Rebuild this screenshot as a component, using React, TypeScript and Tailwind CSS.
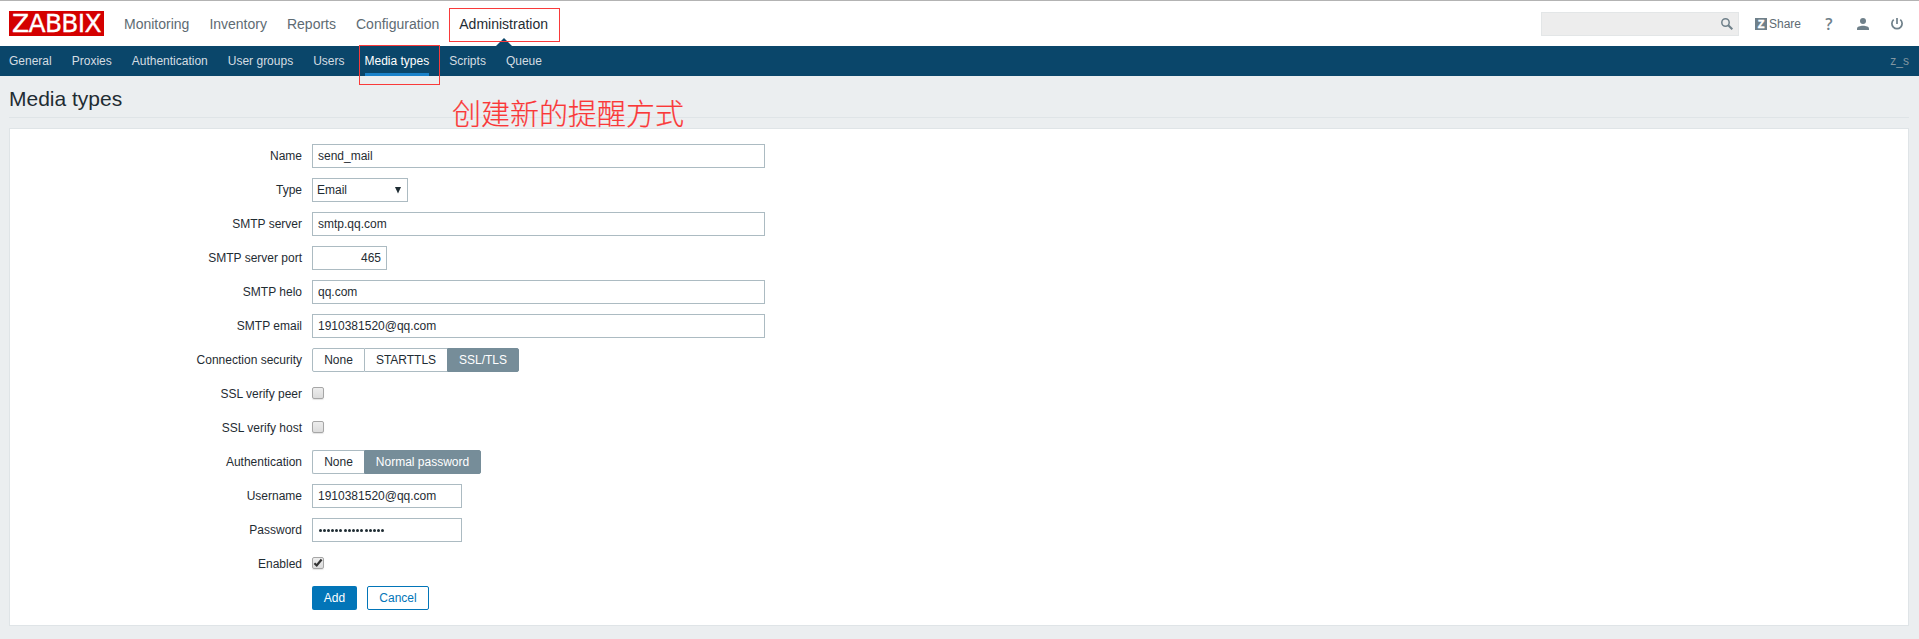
import React from "react";

const NAV = ["Monitoring", "Inventory", "Reports", "Configuration", "Administration"];
const SUB = ["General", "Proxies", "Authentication", "User groups", "Users", "Media types", "Scripts", "Queue"];

function Logo() {
  return (
    <div className="flex h-[25px] w-[95px] items-center justify-center bg-[#d40000] font-['DejaVu_Sans',sans-serif] text-[25px] leading-[29px] tracking-[-0.7px] whitespace-nowrap text-white [-webkit-text-stroke:0.3px_#fff]">
      ZABBIX
    </div>
  );
}

function Row({ label, children }: { label: string; children?: React.ReactNode }) {
  return (
    <div className="flex h-6 items-center gap-2.5">
      <div className="w-[292px] text-right">{label}</div>
      {children}
    </div>
  );
}

function Field({ value, size, className = "" }: { value: string; size: string; className?: string }) {
  return (
    <input
      readOnly
      defaultValue={value}
      className={`h-6 border border-[#acbbc2] bg-white px-[5px] outline-none ${size} ${className}`}
    />
  );
}

function Check({ on = false }: { on?: boolean }) {
  return (
    <div className="mb-0.5 h-3 w-3 rounded-[2px] border border-[#a6a6a6] bg-linear-to-b from-[#ededed] to-[#dcdcdc] shadow-[0_1px_1px_#e4e4e4]">
      {on && (
        <svg width="10" height="10" viewBox="0 0 10 10" fill="none" stroke="#333" strokeWidth="2.2">
          <path d="M1.4 5.3L3.7 7.5L8.6 1.5" />
        </svg>
      )}
    </div>
  );
}

export default function App() {
  return (
    <div className="flex h-[639px] w-[1919px] flex-col bg-[#ebeef0] font-['Liberation_Sans',Arial,sans-serif] text-xs text-[#1f2c33]">
      <header className="flex h-[46px] items-center border-t border-[#b3b3b3] bg-white px-[9px]">
        <Logo />
        <nav className="ml-5 flex gap-5 text-sm text-[#5e6b73]">
          {NAV.map((n) => (
            <div key={n} className={n === "Administration" ? "relative text-[#1f2c33]" : ""}>
              {n}
              {n === "Administration" && (
                <>
                  <svg className="absolute top-6 left-[37px]" width="16" height="9" viewBox="0 0 16 9" fill="#0a466a">
                    <path d="M0 8L8 0L16 8V9H0Z" />
                  </svg>
                  <div className="absolute -top-1.5 -left-2.5 h-[34px] w-[111px] border border-[#f93a3a]" />
                </>
              )}
            </div>
          ))}
        </nav>
        <div className="ml-auto flex items-center text-[#6f808a]">
          <div className="mr-4 flex h-6 w-[198px] items-center justify-end border border-[#e3e6e7] bg-[#ededed] pr-[5px]">
            <svg width="12" height="12" viewBox="0 0 12 12" fill="none" stroke="currentColor">
              <circle cx="4.5" cy="4.5" r="3.7" strokeWidth="1.5" />
              <path d="M7.3 7.3L11.3 11.3" strokeWidth="2" />
            </svg>
          </div>
          <span className="h-3 w-3 bg-[#6f808a] text-center text-[11px] leading-3 font-bold text-white [-webkit-text-stroke:0.4px_#fff]">Z</span>
          <span className="ml-0.5 w-[55px] text-[#5e6b73]">Share</span>
          <span className="w-2.5 text-center font-['Open_Sans',sans-serif] text-base leading-4 font-semibold">?</span>
          <svg className="ml-[23px]" width="12" height="12" viewBox="0 0 12 12" fill="currentColor">
            <circle cx="6" cy="3" r="3" />
            <path d="M0 12V10.5C0 8.6 3 7.7 6 7.7S12 8.6 12 10.5V12Z" />
          </svg>
          <svg className="mr-[7px] ml-[22px]" width="12" height="12" viewBox="0 0 12 12" fill="none" stroke="currentColor" strokeWidth="1.7">
            <path d="M6 0V6M2.7 1.7A5.1 5.1 0 1 0 9.3 1.7" />
          </svg>
        </div>
      </header>

      <div className="flex h-[30px] items-stretch gap-5 bg-[#0a466a] pr-[10px] pl-[9px] leading-[30px] text-[#d5dde2]">
        {SUB.map((s) => (
          <div key={s} className={s === "Media types" ? "relative border-b-[3px] border-[#1a82ca] text-white" : ""}>
            {s}
            {s === "Media types" && (
              <div className="absolute -top-px -left-1.5 h-10 w-[81px] border border-[#f93a3a]" />
            )}
          </div>
        ))}
        <div className="ml-auto text-[#8296a1]">z_s</div>
      </div>

      <div className="relative mx-[9px] mr-[10px] h-[42px] border-b border-[#dfe4e7] pt-[9px]">
        <h1 className="text-[21px] leading-7">Media types</h1>
        <div className="absolute top-[19px] left-[443px] font-['Noto_Sans_CJK_SC',sans-serif] text-[29px] leading-[34px] font-light whitespace-nowrap text-[#fa3838] [-webkit-text-stroke:0.2px_#fa3838]">
          创建新的提醒方式
        </div>
      </div>

      <main className="mt-2.5 mr-[10px] ml-[9px] flex h-[498px] flex-col gap-2.5 border border-[#dfe4e7] bg-white pt-[15px]">
        <Row label="Name"><Field value="send_mail" size="w-[453px]" /></Row>
        <Row label="Type">
          <div className="flex h-6 w-24 items-center justify-between border border-[#acbbc2] pr-1.5 pl-1">
            Email
            <svg width="6" height="7" viewBox="0 0 6 7" fill="#1f2c33"><path d="M0 0H6L3 6.5Z" /></svg>
          </div>
        </Row>
        <Row label="SMTP server"><Field value="smtp.qq.com" size="w-[453px]" /></Row>
        <Row label="SMTP server port"><Field value="465" size="w-[75px]" className="text-right" /></Row>
        <Row label="SMTP helo"><Field value="qq.com" size="w-[453px]" /></Row>
        <Row label="SMTP email"><Field value="1910381520@qq.com" size="w-[453px]" /></Row>
        <Row label="Connection security">
          <div className="flex h-6 text-center leading-[22px]">
            <div className="w-[53px] rounded-l-[2px] border border-[#acbbc2]">None</div>
            <div className="w-[82px] border-y border-[#acbbc2]">STARTTLS</div>
            <div className="w-[72px] rounded-r-[2px] border border-[#768d99] bg-[#768d99] text-white">SSL/TLS</div>
          </div>
        </Row>
        <Row label="SSL verify peer"><Check /></Row>
        <Row label="SSL verify host"><Check /></Row>
        <Row label="Authentication">
          <div className="flex h-6 text-center leading-[22px]">
            <div className="w-[52px] rounded-l-[2px] border border-r-0 border-[#acbbc2]">None</div>
            <div className="w-[117px] rounded-r-[2px] border border-[#768d99] bg-[#768d99] text-white">Normal password</div>
          </div>
        </Row>
        <Row label="Username"><Field value="1910381520@qq.com" size="w-[150px]" /></Row>
        <Row label="Password">
          <div className="flex h-6 w-[150px] items-center gap-[1.2px] border border-[#acbbc2] pl-[5.5px]">
            {Array.from({ length: 16 }, (_, i) => (
              <span key={i} className="h-[3px] w-[3px] rounded-full bg-[#1f2c33]" />
            ))}
          </div>
        </Row>
        <Row label="Enabled"><Check on /></Row>
        <Row label="">
          <button className="h-6 w-[45px] rounded-[2px] bg-[#0275b8] text-white">Add</button>
          <button className="h-6 w-[62px] rounded-[2px] border border-[#0275b8] text-[#0275b8]">Cancel</button>
        </Row>
      </main>
    </div>
  );
}
